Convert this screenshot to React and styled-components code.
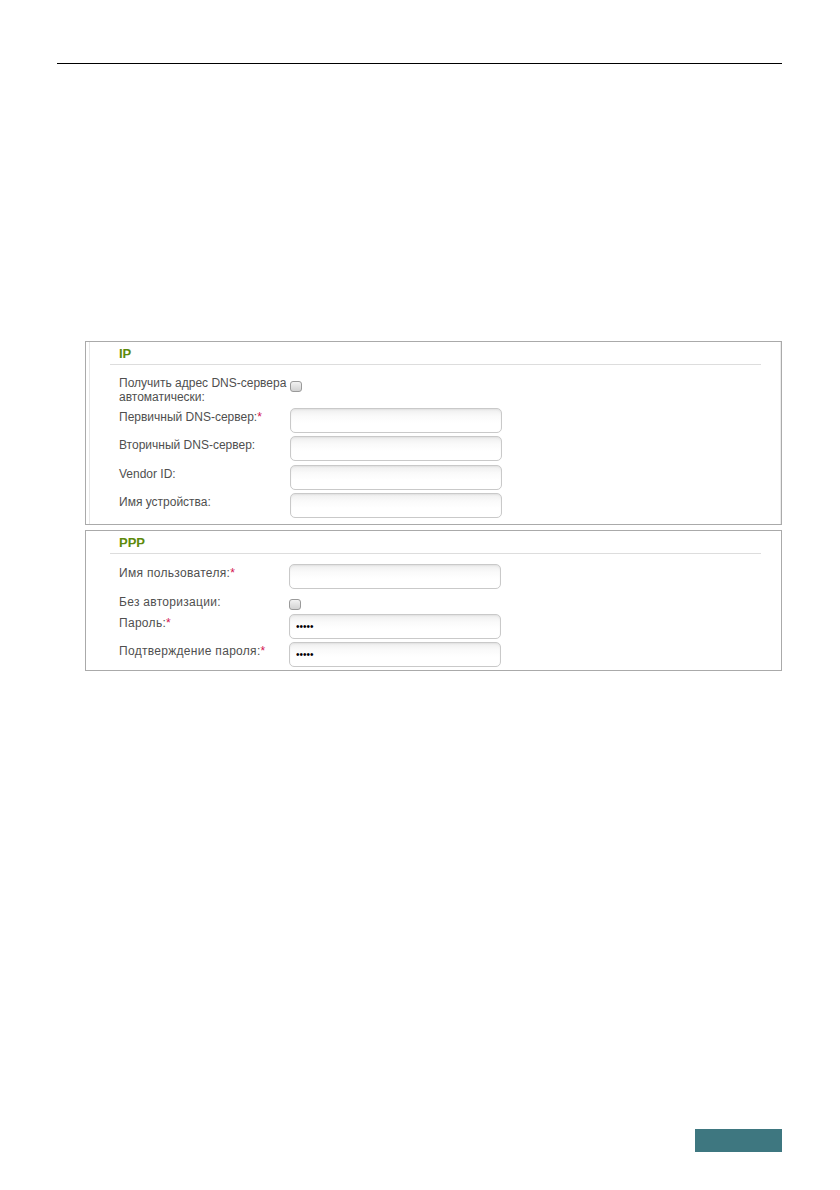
import React from 'react';
import styled, { createGlobalStyle } from 'styled-components';

const GlobalStyle = createGlobalStyle`
  body {
    margin: 0;
    background: #fff;
    font-family: "Liberation Sans", Arial, sans-serif;
  }
`;

const ipFields = [
  { label: 'Первичный DNS-сервер:', required: true },
  { label: 'Вторичный DNS-сервер:' },
  { label: 'Vendor ID:' },
  { label: 'Имя устройства:' },
];

const App = () => {
  return (
    <Page>
      <GlobalStyle />
      <Rule />
      <Forms>
        <Fieldset>
          <Panel $edged $bottom={6}>
            <Legend>
              <Title>IP</Title>
            </Legend>
            <List $top={9}>
              <Row>
                <Label $width={171} $lines={2}>
                  Получить адрес DNS-сервера автоматически:
                </Label>
                <Check $offset={7} />
              </Row>
              {ipFields.map((field) => (
                <Row key={field.label}>
                  <Label $width={171}>
                    {field.label}
                    {field.required && <Star>*</Star>}
                  </Label>
                  <Field type="text" readOnly />
                </Row>
              ))}
            </List>
          </Panel>
        </Fieldset>

        <Fieldset>
          <Panel $bottom={3}>
            <Legend>
              <Title>PPP</Title>
            </Legend>
            <List $top={10}>
              <Row>
                <Label $width={170} $spaced>
                  Имя пользователя:<Star>*</Star>
                </Label>
                <Field type="text" readOnly />
              </Row>
              <Row $min={17}>
                <Label $width={170} $spaced>Без авторизации:</Label>
                <Check $offset={6.5} />
              </Row>
              <Row>
                <Label $width={170} $spaced>
                  Пароль:<Star>*</Star>
                </Label>
                <Field type="password" value="12345" readOnly />
              </Row>
              <Row>
                <Label $width={170} $spaced>
                  Подтверждение пароля:<Star>*</Star>
                </Label>
                <Field type="password" value="12345" readOnly />
              </Row>
            </List>
          </Panel>
        </Fieldset>
      </Forms>
      <PageTab />
    </Page>
  );
};

const Page = styled.div`
  width: 840px;
  min-height: 1190px;
  box-sizing: border-box;
  padding: 63px 58px 38px 57px;
  display: flex;
  flex-direction: column;
`;

const Rule = styled.div`
  height: 1px;
  background: #000;
`;

const Forms = styled.div`
  margin-top: 277px;
  padding-left: 28px;
  display: flex;
  flex-direction: column;
  gap: 5px;
`;

const Fieldset = styled.section`
  width: 697px;
  box-sizing: border-box;
  border: 1px solid #aaaaaa;
`;

const Panel = styled.div`
  margin-left: 3px;
  padding-bottom: ${(p) => p.$bottom}px;
  border-left: 1px solid ${(p) => (p.$edged ? '#e6e6e6' : 'transparent')};
  border-right: 1px solid ${(p) => (p.$edged ? '#ececec' : 'transparent')};
`;

const Legend = styled.div`
  margin: 0 19px 0 20px;
  padding: 4px 0 2px 9px;
  border-bottom: 1px solid #dddddd;
`;

const Title = styled.h3`
  margin: 0;
  font-size: 13px;
  line-height: 16px;
  font-weight: bold;
  color: #5d8a0c;
`;

const List = styled.div`
  padding: ${(p) => p.$top}px 0 0 29px;
  display: flex;
  flex-direction: column;
  gap: 3.5px;
`;

const Row = styled.div`
  display: flex;
  align-items: flex-start;
  min-height: ${(p) => (p.$min ? `${p.$min}px` : 'auto')};
`;

const Label = styled.div`
  width: ${(p) => p.$width}px;
  flex-shrink: 0;
  padding-top: 2px;
  font-size: 12px;
  line-height: 14px;
  letter-spacing: ${(p) => (p.$spaced ? '0.3px' : '0')};
  color: #4f4f4f;
`;

const Star = styled.span`
  color: #d3124f;
`;

const Check = styled.span`
  display: block;
  width: 12px;
  height: 11px;
  margin-top: ${(p) => p.$offset}px;
  box-sizing: border-box;
  border: 1px solid #9a9a9a;
  border-radius: 3px;
  background: linear-gradient(#f2f2f2, #d2d2d2);
`;

const Field = styled.input`
  width: 212px;
  height: 25px;
  box-sizing: border-box;
  margin: 0;
  padding: 0 6px;
  border: 1px solid #c9c9c9;
  border-radius: 5px;
  background: linear-gradient(#eeeeee 0, #fafafa 7px, #ffffff 14px);
  box-shadow: inset 0 1px 2px rgba(0, 0, 0, 0.06);
  font-family: "Liberation Sans", Arial, sans-serif;
  font-size: 10px;
  color: #000;
  outline: none;
`;

const PageTab = styled.div`
  margin-top: auto;
  align-self: flex-end;
  width: 87px;
  height: 23px;
  background: #3e7780;
`;

export default App;
